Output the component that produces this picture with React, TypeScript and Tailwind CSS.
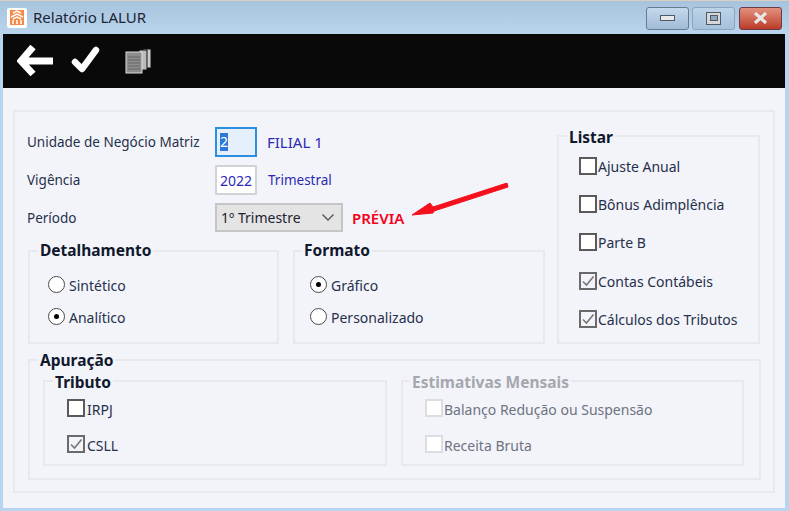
import React from "react";

const font = "font-['Noto_Sans','Liberation_Sans',sans-serif]";

function Group({ title, className = "", disabled = false, legendClass = "top-[-11px]", children }: { title: string; className?: string; disabled?: boolean; legendClass?: string; children: React.ReactNode }) {
  return (
    <div className={`relative border-2 border-[#e8e9ec] ${className}`}>
      <span className={`absolute left-[8px] bg-[#f3f4fa] px-[2px] text-[15.5px] leading-[18px] font-bold ${disabled ? "text-[#a4a8ad]" : "text-[#10182c]"} ${legendClass}`}>{title}</span>
      {children}
    </div>
  );
}

function Radio({ label, checked = false }: { label: string; checked?: boolean }) {
  return (
    <div className="flex items-center gap-[4px] h-[20px]">
      <span className="w-[17px] h-[17px] rounded-full border-[1.5px] border-[#4a4a4a] bg-white flex items-center justify-center">
        {checked && <span className="w-[5px] h-[5px] rounded-full bg-black" />}
      </span>
      <span className="text-[14px] text-[#26304a] pt-[2px]">{label}</span>
    </div>
  );
}

function Check({ label, checked = false, disabled = false, className = "", textClass = "" }: { label: string; checked?: boolean; disabled?: boolean; className?: string; textClass?: string }) {
  return (
    <div className={`flex items-center gap-[1px] h-[20px] ${className}`}>
      <span className={`w-[18px] h-[18px] border-2 flex items-center justify-center ${disabled ? "border-[#dcdde0] bg-white" : checked ? "border-[#6a6a6a] bg-[#f3f4fa]" : "border-[#5a5a5a] bg-white"}`}>
        {checked && (
          <svg width="14" height="14" viewBox="0 0 14 14" fill="none">
            <path d="M2 7.5 L5.5 11 L12.5 2.5" stroke="#777" strokeWidth="1.6" />
          </svg>
        )}
      </span>
      <span className={`text-[14px] ${disabled ? "text-[#6d7380]" : "text-[#26304a]"} ${textClass}`}>{label}</span>
    </div>
  );
}

function WinBtn({ className, children }: { className: string; children: React.ReactNode }) {
  return <div className={`w-[43px] h-[23px] rounded-[3px] border flex items-center justify-center ${className}`}>{children}</div>;
}

export default function App() {
  return (
    <div className={`w-[789px] h-[511px] flex flex-col overflow-hidden bg-[#b9d4ee] ${font}`}>
      <div className="h-[1px] bg-[#d8cfc0]" />
      <div className="h-[33px] flex items-center bg-gradient-to-b from-[#a8c4dc] to-[#b9d5ee] pl-[7px] pr-[7px]">
        <div className="w-[20px] h-[20px] bg-white rounded-[2px] flex items-center justify-center shrink-0">
          <svg width="14" height="15" viewBox="0 0 14 15">
            <rect width="14" height="15" fill="#f58a45" />
            <path d="M3 3 L7 1 L11 3 M1 7 L7 4 L13 7 M3 9 L7 7 L11 9 M3 14 V10 M7 14 V10 M11 14 V10" stroke="#fff" strokeWidth="1.5" fill="none" />
          </svg>
        </div>
        <span className="ml-[6px] text-[15px] text-[#1c2436]">Relatório LALUR</span>
        <div className="ml-auto flex gap-[3px] mt-[1px]">
          <WinBtn className="border-[#6b7b8e] bg-gradient-to-b from-[#c6d9ec] to-[#9fbbd6]">
            <span className="w-[15px] h-[6px] bg-[#e9e9e9] border border-[#4e5a68]" />
          </WinBtn>
          <WinBtn className="border-[#8fa5bb] bg-gradient-to-b from-[#bdd3e8] to-[#a5c1dc]">
            <span className="w-[15px] h-[13px] bg-[#d6d6d6] border border-[#4e5a68] flex items-center justify-center">
              <span className="w-[8px] h-[6px] bg-[#8ea6c2] border border-[#4e5a68]" />
            </span>
          </WinBtn>
          <WinBtn className="border-[#6e3a48] bg-gradient-to-b from-[#e2917f] to-[#bb3a26] ml-[1px]">
            <svg width="15" height="12" viewBox="0 0 15 12">
              <path d="M2 1 L13 11 M13 1 L2 11" stroke="#e8e8e8" strokeWidth="3.2" />
            </svg>
          </WinBtn>
        </div>
      </div>

      <div className="flex-1 flex flex-col ml-[3px] mr-[4px] mb-[3px] min-h-0 relative">
        <div className="h-[54px] bg-[#090909] flex items-center pl-[14px] shrink-0">
          <svg width="37" height="32" viewBox="0 0 37 32" className="mt-[0px]">
            <path d="M16 2 L4 16 L16 29 M5 16 H36" stroke="#fff" strokeWidth="7" fill="none" strokeLinejoin="miter" />
          </svg>
          <svg width="30" height="28" viewBox="0 0 30 28" className="ml-[17px] mt-[-2px]">
            <path d="M4 16 L11 23 L25 4" stroke="#fff" strokeWidth="6.5" strokeLinecap="round" strokeLinejoin="round" fill="none" />
          </svg>
          <svg width="28" height="26" viewBox="0 0 28 26" className="ml-[24px] mt-[-1px]">
            <rect x="18" y="1" width="8" height="19" fill="#ccc" stroke="#111" />
            <rect x="14" y="2" width="8" height="20" fill="#bbb" stroke="#111" />
            <rect x="1" y="4" width="16" height="21" fill="#8d8d8d" stroke="#ddd" />
            <path d="M3 9H15M3 12H15M3 15H15M3 18H15M3 21H15" stroke="#666" />
          </svg>
        </div>

        <div className="flex-1 bg-[#f3f4fa] pt-[22px] pl-[10px] pr-[10px]">
          <div className="h-[383px] border-2 border-[#e8e9ec] pt-[15px] px-[13px]">
            <div className="flex gap-[12px]">
              <div className="w-[517px]">
                <div className="flex flex-col gap-[8px] ml-[-1px]">
                  <div className="flex items-center h-[30px]">
                    <span className="w-[188px] text-[13.5px] text-[#26304a]">Unidade de Negócio Matriz</span>
                    <div className="w-[42px] h-[30px] border-2 border-[#2b8fe0] bg-[#e6f0fc] flex items-center pl-[3px]">
                      <span className="bg-[#2b78d8] text-white text-[14px] leading-[18px]">2</span>
                    </div>
                    <span className="ml-[10px] text-[15px] text-[#2a2ab4]">FILIAL 1</span>
                  </div>
                  <div className="flex items-center h-[30px]">
                    <span className="w-[188px] text-[13.5px] text-[#26304a]">Vigência</span>
                    <div className="w-[42px] h-[30px] border-2 border-[#d2d3d6] bg-white flex items-center justify-center">
                      <span className="text-[14px] text-[#2a2ab4]">2022</span>
                    </div>
                    <span className="ml-[11px] text-[13.5px] text-[#2a2ab4]">Trimestral</span>
                  </div>
                  <div className="flex items-center h-[29px]">
                    <span className="w-[188px] text-[13.5px] text-[#26304a] pt-[2px]">Período</span>
                    <div className="w-[128px] h-[29px] border-2 border-[#c4c5c7] bg-[#e4e4e4] flex items-center pl-[4px] pr-[6px] justify-between">
                      <span className="text-[14px] text-[#1e2330]">1º Trimestre</span>
                      <svg width="14" height="9" viewBox="0 0 14 9" fill="none">
                        <path d="M1.5 1.5 L7 7 L12.5 1.5" stroke="#555" strokeWidth="1.4" />
                      </svg>
                    </div>
                    <span className="ml-[9px] text-[15px] font-semibold text-[#f5001c] pt-[2px]">PRÉVIA</span>
                  </div>
                </div>
                <div className="flex gap-[14px] mt-[18px]">
                  <Group title="Detalhamento" className="w-[251px] h-[94px]">
                    <div className="flex flex-col gap-[12px] pt-[22px] pl-[18px]">
                      <Radio label="Sintético" />
                      <Radio label="Analítico" checked />
                    </div>
                  </Group>
                  <Group title="Formato" className="w-[252px] h-[94px]" legendClass="top-[-11px] ml-[-1px]">
                    <div className="flex flex-col gap-[12px] pt-[22px] pl-[15px]">
                      <Radio label="Gráfico" checked />
                      <Radio label="Personalizado" />
                    </div>
                  </Group>
                </div>
              </div>
              <Group title="Listar" className="w-[205px] h-[209px] mt-[8px]" legendClass="top-[-9px]">
                <div className="flex flex-col gap-[18px] pt-[19px] pl-[20px]">
                  <Check label="Ajuste Anual" />
                  <Check label="Bônus Adimplência" />
                  <Check label="Parte B" />
                  <Check label="Contas Contábeis" checked className="mt-[1px]" />
                  <Check label="Cálculos dos Tributos" checked />
                </div>
              </Group>
            </div>
            <Group title="Apuração" className="mt-[15px] h-[121px] w-[733px] pt-[19px] pl-[13px] pr-[15px]" legendClass="top-[-10px]">
              <div className="flex gap-[14px]">
                <Group title="Tributo" className="w-[344px] h-[86px]" legendClass="top-[-9px]">
                  <div className="flex flex-col gap-[16px] pt-[16px] pl-[22px]">
                    <Check label="IRPJ" textClass="ml-[1px] pt-[2px]" />
                    <Check label="CSLL" checked textClass="ml-[1px] pt-[2px]" />
                  </div>
                </Group>
                <Group title="Estimativas Mensais" disabled className="w-[343px] h-[86px]" legendClass="top-[-9px] ml-[-1px]">
                  <div className="flex flex-col gap-[16px] pt-[16px] pl-[22px]">
                    <Check label="Balanço Redução ou Suspensão" disabled textClass="pt-[2px]" />
                    <Check label="Receita Bruta" disabled textClass="pt-[2px]" />
                  </div>
                </Group>
              </div>
            </Group>
          </div>
        </div>

        <svg width="110" height="45" viewBox="0 0 110 45" className="absolute left-[403px] top-[149px]">
          <path d="M6 32 L24 20 L27 24 L101 0 L102 4 L28 28 L27 30 Z" fill="#f4101c" stroke="#f4101c" strokeWidth="1" strokeLinejoin="round" />
        </svg>
      </div>
    </div>
  );
}
